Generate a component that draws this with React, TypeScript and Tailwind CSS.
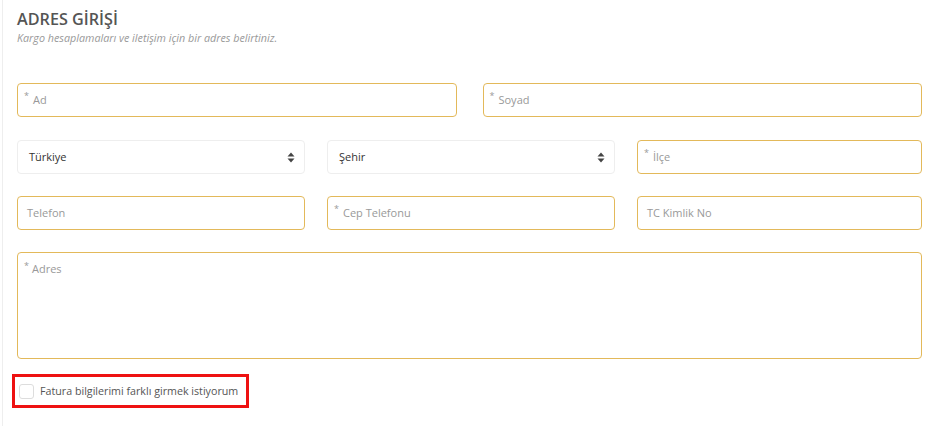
export default function App() {
  const gold = "border-[#e3b95a]";
  return (
    <div className="h-[426px] w-[938px] bg-white font-['Open_Sans',sans-serif]">
      <div className="ml-[2px] h-full border-l border-[#eeeeee] pl-[14px] pr-[16px] pt-[7px]">
        <h2 className="text-[16.2px] font-semibold leading-[24px] text-[#555555]">ADRES GİRİŞİ</h2>
        <p className="text-[10.75px] italic leading-[14px] text-[#999999]">
          Kargo hesaplamaları ve iletişim için bir adres belirtiniz.
        </p>

        <div className="mt-[38px] grid grid-cols-2 gap-[26px]">
          <Field label="Ad" required border={gold} />
          <Field label="Soyad" required border={gold} />
        </div>

        <div className="mt-[23px] grid grid-cols-[288px_288px_1fr] gap-[22px]">
          <Select value="Türkiye" />
          <Select value="Şehir" />
          <Field label="İlçe" required border={gold} />
        </div>

        <div className="mt-[22px] grid grid-cols-[288px_288px_1fr] gap-[22px]">
          <Field label="Telefon" border={gold} />
          <Field label="Cep Telefonu" required border={gold} />
          <Field label="TC Kimlik No" border={gold} />
        </div>

        <div className={`mt-[22px] h-[107px] rounded-[4px] border ${gold} px-[6px] pt-[8px] text-[11px] text-[#999999]`}>
          <span className="relative -top-[4px] mr-[3px] text-[9px]">*</span>Adres
        </div>

        <div className="mt-[15px] -ml-[5px] flex h-[34px] w-[237px] items-center gap-[6px] border-[3px] border-[#ee1111] pl-[4px]">
          <span className="h-[15px] w-[15px] shrink-0 rounded-[3px] border border-[#dddddd] bg-white" />
          <span className="whitespace-nowrap text-[10.7px] text-[#555555]">Fatura bilgilerimi farklı girmek istiyorum</span>
        </div>
      </div>
    </div>
  );
}

function Field({ label, required, border }: { label: string; required?: boolean; border: string }) {
  return (
    <div className={`flex h-[34px] items-center rounded-[4px] border ${border} px-[6px] text-[11px] text-[#999999]`}>
      {required ? <span className="relative -top-[4px] mr-[4px] text-[9px]">*</span> : null}
      <span className={required ? "" : "pl-[3px]"}>{label}</span>
    </div>
  );
}

function Select({ value }: { value: string }) {
  return (
    <div className="flex h-[34px] items-center justify-between rounded-[4px] border border-[#eeeeee] pl-[11px] pr-[9px] text-[11px] text-[#333333]">
      <span>{value}</span>
      <svg width="8" height="11" viewBox="0 0 8 11" fill="#444">
        <path d="M4 0.5 L7.5 4.5 H0.5 Z" />
        <path d="M4 10.5 L7.5 6.5 H0.5 Z" />
      </svg>
    </div>
  );
}
